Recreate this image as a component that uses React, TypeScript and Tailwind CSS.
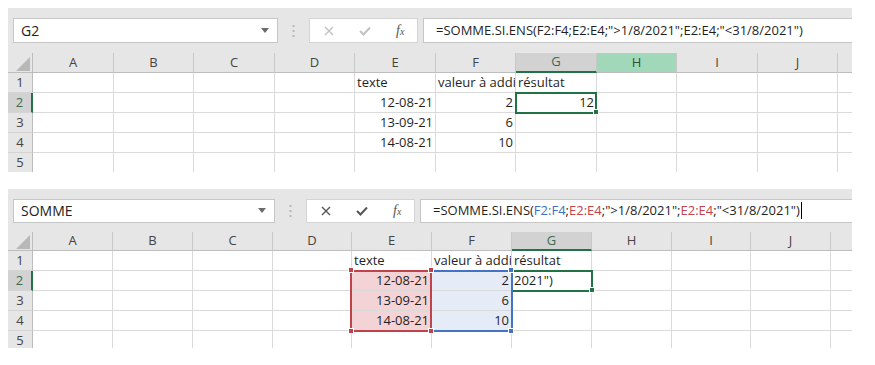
import type { ReactNode } from "react";

type Cell = { text: string; right?: boolean; fill?: string };

const LETTERS = ["A", "B", "C", "D", "E", "F", "G", "H", "I", "J", ""];

function FormulaBar({
  name,
  formula,
  editing,
  barH,
  boxH,
  nameW,
  btnW,
}: {
  name: string;
  formula: ReactNode;
  editing: boolean;
  barH: string;
  boxH: string;
  nameW: string;
  btnW: string;
}) {
  const iconColor = editing ? "#555555" : "#c2c2c2";
  return (
    <div className={`flex items-center bg-[#e6e6e6] ${barH}`}>
      <div
        className={`ml-[5px] flex ${nameW} ${boxH} items-center justify-between border border-[#c6c6c6] bg-white pl-[7px] pr-[8px] text-[14px] text-[#222]`}
      >
        <span>{name}</span>
        <svg width="8" height="5" viewBox="0 0 8 5">
          <path d="M0 0h8L4 5z" fill="#6b6b6b" />
        </svg>
      </div>
      <div className="flex w-[31px] justify-center">
        <svg width="3" height="12" viewBox="0 0 3 12">
          <rect x="0.5" y="0" width="2" height="2" fill="#b8b8b8" />
          <rect x="0.5" y="5" width="2" height="2" fill="#b8b8b8" />
          <rect x="0.5" y="10" width="2" height="2" fill="#b8b8b8" />
        </svg>
      </div>
      <div className={`flex ${btnW} ${boxH} items-center gap-[25px] border border-[#d4d4d4] bg-white pl-[14px]`}>
        <svg width="10" height="10" viewBox="0 0 10 10">
          <path d="M1 1l8 8M9 1l-8 8" stroke={iconColor} strokeWidth="1.4" />
        </svg>
        <svg width="12" height="10" viewBox="0 0 12 10">
          <path d="M1 5l3.5 3.5L11 1.5" stroke={iconColor} strokeWidth="2" fill="none" />
        </svg>
        <span className="font-['Liberation_Serif',serif] text-[14px] italic leading-none text-[#555]">
          f<span className="text-[10px]">x</span>
        </span>
      </div>
      <div
        className={`ml-[5px] flex ${boxH} flex-1 items-center whitespace-nowrap border border-r-0 border-[#c6c6c6] bg-white pl-[12px] text-[13px] text-[#1f1f1f]`}
      >
        {formula}
      </div>
    </div>
  );
}

function Sheet({
  cols,
  rows,
  height,
  cells,
  hoverCol,
  children,
}: {
  cols: string;
  rows: string;
  height: string;
  cells: Record<string, Cell>;
  hoverCol?: string;
  children?: ReactNode;
}) {
  return (
    <div className={`relative overflow-hidden ${height}`}>
      <div className={`grid ${cols} ${rows}`}>
        <div className="flex items-end justify-end border-r border-b border-[#bdbdbd] bg-[#e6e6e6] pr-[1px] pb-[1px]">
          <svg width="15" height="14" viewBox="0 0 15 14">
            <path d="M14 0v14H0z" fill="#b8b8b8" />
          </svg>
        </div>
        {LETTERS.map((l, i) => {
          let cls = "border-b border-b-[#bdbdbd] bg-[#e6e6e6] text-[#444]";
          if (l === "G") cls = "border-b-2 border-b-[#217346] bg-[#d2d2d2] text-[#3d6b50]";
          if (l === hoverCol) cls = "border-b border-b-[#bdbdbd] bg-[#a0d8b9] text-[#2f4f3c]";
          return (
            <div
              key={i}
              className={`flex items-center justify-center text-[13px] ${cls} ${
                l ? "border-r border-r-[#c8c8c8]" : ""
              }`}
            >
              {l}
            </div>
          );
        })}
        {[1, 2, 3, 4, 5].map((r) => (
          <Row key={r} r={r} cells={cells} />
        ))}
      </div>
      {children}
    </div>
  );
}

function Row({ r, cells }: { r: number; cells: Record<string, Cell> }) {
  const active = r === 2;
  return (
    <>
      <div
        className={`flex items-center justify-center border-b border-b-[#d4d4d4] text-[13px] ${
          active
            ? "border-r-2 border-r-[#217346] bg-[#d2d2d2] text-[#3d6b50]"
            : "border-r border-r-[#bdbdbd] bg-[#e6e6e6] text-[#444]"
        }`}
      >
        {r}
      </div>
      {LETTERS.map((l, i) => {
        const c = cells[`${l}${r}`];
        return (
          <div
            key={i}
            className={`flex items-end overflow-hidden whitespace-nowrap border-b border-[#dadada] px-[2px] pb-[1px] text-[13px] leading-[17px] text-[#1f1f1f] ${
              l ? "border-r" : ""
            } ${c?.right ? "justify-end" : "justify-start"} ${c?.fill ?? "bg-white"}`}
          >
            {c?.text}
          </div>
        );
      })}
    </>
  );
}

function Handle({ pos, color }: { pos: string; color: string }) {
  return <div className={`absolute h-[6px] w-[6px] border border-white ${pos} ${color}`} />;
}

// F1 is clipped by the filled G1 next to it, as in Excel
const baseCells: Record<string, Cell> = {
  E1: { text: "texte" },
  F1: { text: "valeur à addi" },
  G1: { text: "résultat" },
  E2: { text: "12-08-21", right: true },
  F2: { text: "2", right: true },
  E3: { text: "13-09-21", right: true },
  F3: { text: "6", right: true },
  E4: { text: "14-08-21", right: true },
  F4: { text: "10", right: true },
};

const cells1: Record<string, Cell> = { ...baseCells, G2: { text: "12", right: true } };

const red = "bg-[#f3d3d5]";
const blue = "bg-[#e6ecf7]";
const cells2: Record<string, Cell> = {
  ...baseCells,
  E2: { text: "12-08-21", right: true, fill: red },
  E3: { text: "13-09-21", right: true, fill: red },
  E4: { text: "14-08-21", right: true, fill: red },
  F2: { text: "2", right: true, fill: blue },
  F3: { text: "6", right: true, fill: blue },
  F4: { text: "10", right: true, fill: blue },
  G2: { text: '2021")' },
};

export default function App() {
  return (
    <div className="h-[365px] w-[875px] overflow-hidden bg-white pt-[8px] pl-[8px] font-['Open_Sans',sans-serif]">
      <div className="w-[844px]">
        <FormulaBar
          name="G2"
          editing={false}
          barH="h-[45px]"
          boxH="h-[25px]"
          nameW="w-[265px]"
          btnW="w-[109px]"
          formula={<span>=SOMME.SI.ENS(F2:F4;E2:E4;"&gt;1/8/2021";E2:E4;"&lt;31/8/2021")</span>}
        />
        <Sheet
          cols="grid-cols-[25px_81px_80px_81px_80px_81px_80px_81px_80px_81px_80px_14px]"
          rows="grid-rows-[20px_20px_20px_20px_20px_20px]"
          height="h-[119px]"
          cells={cells1}
          hoverCol="H"
        >
          <div className="absolute top-[39px] left-[507px] h-[22px] w-[82px] border-2 border-[#217346]" />
          <Handle pos="top-[56px] left-[585px]" color="bg-[#217346]" />
        </Sheet>
      </div>

      <div className="mt-[17px] w-[844px]">
        <FormulaBar
          name="SOMME"
          editing
          barH="h-[43px]"
          boxH="h-[24px]"
          nameW="w-[262px]"
          btnW="w-[109px]"
          formula={
            <span className="flex items-center">
              =SOMME.SI.ENS(<span className="text-[#3f6fc0]">F2:F4</span>;
              <span className="text-[#c0434c]">E2:E4</span>;"&gt;1/8/2021";
              <span className="text-[#c0434c]">E2:E4</span>;"&lt;31/8/2021")
              <span className="ml-[1px] inline-block h-[17px] w-[1px] bg-black" />
            </span>
          }
        />
        <Sheet
          cols="grid-cols-[25px_80px_80px_80px_79px_80px_80px_80px_80px_79px_80px_21px]"
          rows="grid-rows-[19px_20px_20px_20px_20px_20px]"
          height="h-[116px]"
          cells={cells2}
        >
          <div className="absolute top-[38px] left-[503px] h-[22px] w-[82px] border-2 border-[#217346]" />
          <Handle pos="top-[55px] left-[581px]" color="bg-[#217346]" />
          <div className="absolute top-[38px] left-[422px] h-[62px] w-[83px] border-2 border-[#4472c4]" />
          <Handle pos="top-[35px] left-[500px]" color="bg-[#4472c4]" />
          <Handle pos="top-[96px] left-[500px]" color="bg-[#4472c4]" />
          <div className="absolute top-[38px] left-[342px] h-[62px] w-[82px] border-2 border-[#c0434c]" />
          <Handle pos="top-[35px] left-[340px]" color="bg-[#c0434c]" />
          <Handle pos="top-[35px] left-[420px]" color="bg-[#c0434c]" />
          <Handle pos="top-[96px] left-[340px]" color="bg-[#c0434c]" />
          <Handle pos="top-[96px] left-[420px]" color="bg-[#c0434c]" />
        </Sheet>
      </div>
    </div>
  );
}
